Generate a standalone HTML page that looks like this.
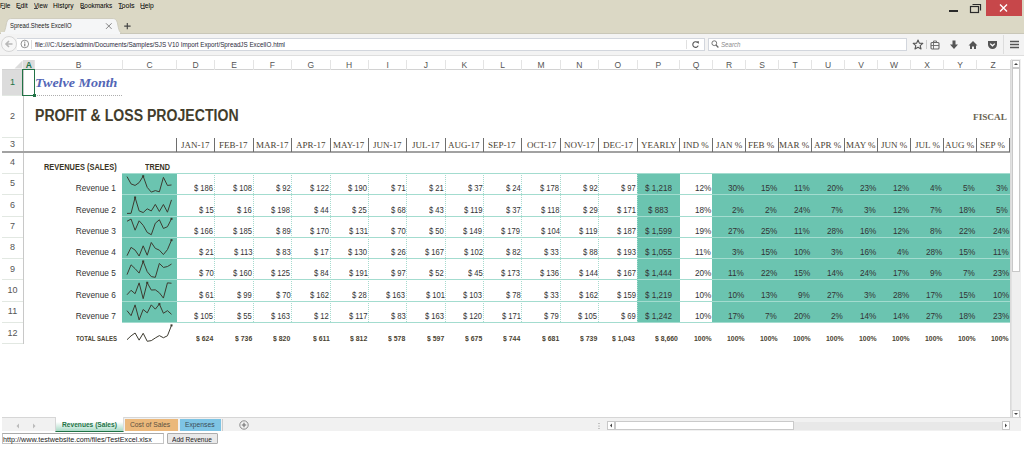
<!DOCTYPE html><html><head><meta charset="utf-8"><style>
*{margin:0;padding:0;box-sizing:border-box}
html,body{width:1024px;height:449px;overflow:hidden;background:#fff;position:relative;font-family:"Liberation Sans",sans-serif}
.a{position:absolute}
.t{position:absolute;white-space:nowrap;line-height:1;transform-origin:0 0}
</style></head><body>
<div class="a" style="left:0;top:0;width:1024px;height:34px;background:#dbd8c5"></div>
<div class="a" style="left:1.5px;top:7.6px;width:3px;height:1px;background:#444"></div>
<div class="a" style="left:17.5px;top:7.6px;width:3px;height:1px;background:#444"></div>
<div class="a" style="left:34.3px;top:7.6px;width:4px;height:1px;background:#444"></div>
<div class="a" style="left:64.5px;top:7.6px;width:2.5px;height:1px;background:#444"></div>
<div class="a" style="left:81px;top:7.6px;width:4px;height:1px;background:#444"></div>
<div class="a" style="left:118.8px;top:7.6px;width:4px;height:1px;background:#444"></div>
<div class="a" style="left:140.8px;top:7.6px;width:4px;height:1px;background:#444"></div>
<div class="a" style="left:986px;top:0;width:36px;height:16px;background:#c7474a"></div>
<svg class="a" style="left:986px;top:0" width="36" height="16"><path d="M14 4.5 L21 11.5 M21 4.5 L14 11.5" stroke="#fff" stroke-width="1.4"/></svg>
<div class="a" style="left:949px;top:10px;width:9px;height:2px;background:#2a2a2a"></div>
<svg class="a" style="left:968px;top:2px" width="14" height="12"><rect x="2.5" y="4.5" width="8" height="6" fill="none" stroke="#2a2a2a" stroke-width="1.2"/><path d="M4.5 2.5 H12.5 V8.5" fill="none" stroke="#2a2a2a" stroke-width="1.2"/></svg>
<svg class="a" style="left:0;top:17px" width="124" height="18"><path d="M0 17 C4 17 5 14 6 9 C7 3 8 1.5 12 1.5 L112 1.5 C116 1.5 117 3 118 9 C119 14 120 16.5 124 17 Z" fill="#f5f6f7" stroke="#c9c7b8" stroke-width="0.8"/></svg>
<svg class="a" style="left:104px;top:22px" width="9" height="9"><path d="M2 1.3 L7.6 6.9 M7.6 1.3 L2 6.9" stroke="#777" stroke-width="0.9"/></svg>
<svg class="a" style="left:123px;top:22px" width="9" height="9"><path d="M4.3 1 V7.2 M1.2 4.1 H7.6" stroke="#444" stroke-width="1.15"/></svg>
<div class="a" style="left:0;top:33px;width:1024px;height:23px;background:#f3f3f3;border-top:1px solid #c9c7b8;border-bottom:1px solid #dedede"></div>
<div class="a" style="left:1px;top:32px;width:119px;height:2px;background:#f5f6f7"></div>
<div class="a" style="left:1px;top:36px;width:16px;height:16px;border-radius:50%;border:1px solid #d6d6d6;background:#f7f7f7"></div>
<svg class="a" style="left:4px;top:39px" width="10" height="10"><path d="M8.5 5 H2 M5 2 L2 5 L5 8" fill="none" stroke="#b8b8b8" stroke-width="1.6"/></svg>
<div class="a" style="left:17px;top:38px;width:688px;height:13px;background:#fff;border:1px solid #d2d6dd;border-left:none"></div>
<svg class="a" style="left:20px;top:39px" width="11" height="11"><circle cx="4.8" cy="5" r="3.8" fill="none" stroke="#777" stroke-width="0.8"/><path d="M4.8 4.5 V7.3" stroke="#555" stroke-width="0.9"/><circle cx="4.8" cy="3.1" r="0.55" fill="#555"/></svg>
<div class="a" style="left:31px;top:40px;width:1px;height:9px;background:#ddd"></div>
<div class="a" style="left:686px;top:40px;width:1px;height:9px;background:#e0e0e0"></div>
<svg class="a" style="left:691px;top:40px" width="9" height="9"><path d="M6.6 2.6 A2.8 2.8 0 1 0 7.2 5.6" fill="none" stroke="#555" stroke-width="1.1"/><path d="M5.4 1.6 L8 1.2 L7.6 3.9 Z" fill="#555"/></svg>
<div class="a" style="left:708px;top:38px;width:199px;height:13px;background:#fff;border:1px solid #d2d6dd"></div>
<svg class="a" style="left:710px;top:40px" width="10" height="10"><circle cx="4.3" cy="3.2" r="2.4" fill="none" stroke="#666" stroke-width="0.9"/><path d="M6 5 L8.4 7.5" stroke="#666" stroke-width="1.2"/></svg>
<svg class="a" style="left:912px;top:39px" width="12" height="11"><path d="M6 1 L7.4 4.2 L10.8 4.4 L8.2 6.6 L9 10 L6 8.2 L3 10 L3.8 6.6 L1.2 4.4 L4.6 4.2 Z" fill="none" stroke="#555" stroke-width="1.1" stroke-linejoin="round"/></svg>
<div class="a" style="left:926px;top:40px;width:1px;height:9px;background:#ccc"></div>
<svg class="a" style="left:930px;top:40px" width="10" height="10"><rect x="1" y="2.5" width="8" height="6.5" rx="1" fill="none" stroke="#666" stroke-width="1.1"/><path d="M3.5 2.5 V1 H6.5 V2.5 M3.5 3 V9 M1 5.5 H9" stroke="#666" stroke-width="0.9" fill="none"/></svg>
<svg class="a" style="left:949px;top:40px" width="10" height="10"><path d="M3.5 0.5 H6.5 V4.5 H9 L5 9 L1 4.5 H3.5 Z" fill="#555"/></svg>
<svg class="a" style="left:968px;top:40px" width="10" height="10"><path d="M5 1 L9.5 5.5 H8 V9 H6 V6.5 H4 V9 H2 V5.5 H0.5 Z" fill="#555"/></svg>
<svg class="a" style="left:987px;top:40px" width="11" height="10"><path d="M1 1 H10 V4.5 A4.5 4.5 0 0 1 1 4.5 Z" fill="#555"/><path d="M3.2 3.6 L5.5 5.8 L7.8 3.6" fill="none" stroke="#fff" stroke-width="1.3"/></svg>
<div class="a" style="left:1003px;top:35px;width:1px;height:19px;background:#ddd"></div>
<svg class="a" style="left:1009px;top:40px" width="11" height="9"><path d="M1 1.5 H10 M1 4.5 H10 M1 7.5 H10" stroke="#555" stroke-width="1.5"/></svg>
<div class="a" style="left:2px;top:69px;width:1008px;height:1px;background:#d2d2d2"></div>
<svg class="a" style="left:14px;top:60px" width="9" height="9"><path d="M8.5 0.5 V8.5 H0.5 Z" fill="#dcdcdc"/></svg>
<div class="a" style="left:23px;top:60px;width:11px;height:9px;background:#dcdcdc"></div>
<div class="t" style="left:23px;top:61px;width:11.5px;text-align:center;font-size:8.5px;color:#217346;font-weight:bold">A</div>
<div class="t" style="left:34.5px;top:61px;width:88.0px;text-align:center;font-size:8.5px;color:#555;font-weight:normal">B</div>
<div class="a" style="left:34px;top:60px;width:1px;height:10px;background:#e4e4e4"></div>
<div class="t" style="left:122.5px;top:61px;width:54.0px;text-align:center;font-size:8.5px;color:#555;font-weight:normal">C</div>
<div class="a" style="left:122px;top:60px;width:1px;height:10px;background:#e4e4e4"></div>
<div class="t" style="left:176.5px;top:61px;width:38.375px;text-align:center;font-size:8.5px;color:#555;font-weight:normal">D</div>
<div class="a" style="left:176px;top:60px;width:1px;height:10px;background:#e4e4e4"></div>
<div class="t" style="left:214.875px;top:61px;width:38.375px;text-align:center;font-size:8.5px;color:#555;font-weight:normal">E</div>
<div class="a" style="left:214px;top:60px;width:1px;height:10px;background:#e4e4e4"></div>
<div class="t" style="left:253.25px;top:61px;width:38.375px;text-align:center;font-size:8.5px;color:#555;font-weight:normal">F</div>
<div class="a" style="left:253px;top:60px;width:1px;height:10px;background:#e4e4e4"></div>
<div class="t" style="left:291.625px;top:61px;width:38.375px;text-align:center;font-size:8.5px;color:#555;font-weight:normal">G</div>
<div class="a" style="left:291px;top:60px;width:1px;height:10px;background:#e4e4e4"></div>
<div class="t" style="left:330.0px;top:61px;width:38.375px;text-align:center;font-size:8.5px;color:#555;font-weight:normal">H</div>
<div class="a" style="left:330px;top:60px;width:1px;height:10px;background:#e4e4e4"></div>
<div class="t" style="left:368.375px;top:61px;width:38.375px;text-align:center;font-size:8.5px;color:#555;font-weight:normal">I</div>
<div class="a" style="left:368px;top:60px;width:1px;height:10px;background:#e4e4e4"></div>
<div class="t" style="left:406.75px;top:61px;width:38.375px;text-align:center;font-size:8.5px;color:#555;font-weight:normal">J</div>
<div class="a" style="left:406px;top:60px;width:1px;height:10px;background:#e4e4e4"></div>
<div class="t" style="left:445.125px;top:61px;width:38.375px;text-align:center;font-size:8.5px;color:#555;font-weight:normal">K</div>
<div class="a" style="left:445px;top:60px;width:1px;height:10px;background:#e4e4e4"></div>
<div class="t" style="left:483.5px;top:61px;width:38.375px;text-align:center;font-size:8.5px;color:#555;font-weight:normal">L</div>
<div class="a" style="left:483px;top:60px;width:1px;height:10px;background:#e4e4e4"></div>
<div class="t" style="left:521.875px;top:61px;width:38.375px;text-align:center;font-size:8.5px;color:#555;font-weight:normal">M</div>
<div class="a" style="left:521px;top:60px;width:1px;height:10px;background:#e4e4e4"></div>
<div class="t" style="left:560.25px;top:61px;width:38.375px;text-align:center;font-size:8.5px;color:#555;font-weight:normal">N</div>
<div class="a" style="left:560px;top:60px;width:1px;height:10px;background:#e4e4e4"></div>
<div class="t" style="left:598.625px;top:61px;width:38.375px;text-align:center;font-size:8.5px;color:#555;font-weight:normal">O</div>
<div class="a" style="left:598px;top:60px;width:1px;height:10px;background:#e4e4e4"></div>
<div class="t" style="left:637.0px;top:61px;width:42.5px;text-align:center;font-size:8.5px;color:#555;font-weight:normal">P</div>
<div class="a" style="left:637px;top:60px;width:1px;height:10px;background:#e4e4e4"></div>
<div class="t" style="left:679.5px;top:61px;width:33.0px;text-align:center;font-size:8.5px;color:#555;font-weight:normal">Q</div>
<div class="a" style="left:679px;top:60px;width:1px;height:10px;background:#e4e4e4"></div>
<div class="t" style="left:712.5px;top:61px;width:33.00999999999999px;text-align:center;font-size:8.5px;color:#555;font-weight:normal">R</div>
<div class="a" style="left:712px;top:60px;width:1px;height:10px;background:#e4e4e4"></div>
<div class="t" style="left:745.51px;top:61px;width:33.00999999999999px;text-align:center;font-size:8.5px;color:#555;font-weight:normal">S</div>
<div class="a" style="left:745px;top:60px;width:1px;height:10px;background:#e4e4e4"></div>
<div class="t" style="left:778.52px;top:61px;width:33.00999999999999px;text-align:center;font-size:8.5px;color:#555;font-weight:normal">T</div>
<div class="a" style="left:778px;top:60px;width:1px;height:10px;background:#e4e4e4"></div>
<div class="t" style="left:811.53px;top:61px;width:33.00999999999999px;text-align:center;font-size:8.5px;color:#555;font-weight:normal">U</div>
<div class="a" style="left:811px;top:60px;width:1px;height:10px;background:#e4e4e4"></div>
<div class="t" style="left:844.54px;top:61px;width:33.00999999999999px;text-align:center;font-size:8.5px;color:#555;font-weight:normal">V</div>
<div class="a" style="left:844px;top:60px;width:1px;height:10px;background:#e4e4e4"></div>
<div class="t" style="left:877.55px;top:61px;width:33.00999999999999px;text-align:center;font-size:8.5px;color:#555;font-weight:normal">W</div>
<div class="a" style="left:877px;top:60px;width:1px;height:10px;background:#e4e4e4"></div>
<div class="t" style="left:910.56px;top:61px;width:33.00999999999999px;text-align:center;font-size:8.5px;color:#555;font-weight:normal">X</div>
<div class="a" style="left:910px;top:60px;width:1px;height:10px;background:#e4e4e4"></div>
<div class="t" style="left:943.5699999999999px;top:61px;width:33.00999999999999px;text-align:center;font-size:8.5px;color:#555;font-weight:normal">Y</div>
<div class="a" style="left:943px;top:60px;width:1px;height:10px;background:#e4e4e4"></div>
<div class="t" style="left:976.5799999999999px;top:61px;width:33.00999999999999px;text-align:center;font-size:8.5px;color:#555;font-weight:normal">Z</div>
<div class="a" style="left:976px;top:60px;width:1px;height:10px;background:#e4e4e4"></div>
<div class="a" style="left:23px;top:70px;width:1px;height:274px;background:#c8c8c8"></div>
<div class="a" style="left:2px;top:70px;width:21px;height:25px;background:#dcdcdc"></div>
<div class="t" style="left:2px;top:70px;width:21px;height:25px;line-height:25px;text-align:center;font-size:9px;color:#217346">1</div>
<div class="a" style="left:2px;top:95px;width:21px;height:1px;background:#e2e8e2"></div>
<div class="t" style="left:2px;top:95px;width:21px;height:42.30000000000001px;line-height:42.30000000000001px;text-align:center;font-size:9px;color:#555">2</div>
<div class="a" style="left:2px;top:137px;width:21px;height:1px;background:#e2e8e2"></div>
<div class="t" style="left:2px;top:137.3px;width:21px;height:14.699999999999989px;line-height:14.699999999999989px;text-align:center;font-size:9px;color:#555">3</div>
<div class="t" style="left:2px;top:152px;width:21px;height:21.400000000000006px;line-height:21.400000000000006px;text-align:center;font-size:9px;color:#555">4</div>
<div class="a" style="left:2px;top:173px;width:21px;height:1px;background:#e2e8e2"></div>
<div class="t" style="left:2px;top:173.4px;width:21px;height:21.310000000000002px;line-height:21.310000000000002px;text-align:center;font-size:9px;color:#555">5</div>
<div class="a" style="left:2px;top:194px;width:21px;height:1px;background:#e2e8e2"></div>
<div class="t" style="left:2px;top:194.71px;width:21px;height:21.310000000000002px;line-height:21.310000000000002px;text-align:center;font-size:9px;color:#555">6</div>
<div class="a" style="left:2px;top:216px;width:21px;height:1px;background:#e2e8e2"></div>
<div class="t" style="left:2px;top:216.02px;width:21px;height:21.309999999999974px;line-height:21.309999999999974px;text-align:center;font-size:9px;color:#555">7</div>
<div class="a" style="left:2px;top:237px;width:21px;height:1px;background:#e2e8e2"></div>
<div class="t" style="left:2px;top:237.32999999999998px;width:21px;height:21.310000000000002px;line-height:21.310000000000002px;text-align:center;font-size:9px;color:#555">8</div>
<div class="a" style="left:2px;top:258px;width:21px;height:1px;background:#e2e8e2"></div>
<div class="t" style="left:2px;top:258.64px;width:21px;height:21.310000000000002px;line-height:21.310000000000002px;text-align:center;font-size:9px;color:#555">9</div>
<div class="a" style="left:2px;top:279px;width:21px;height:1px;background:#e2e8e2"></div>
<div class="t" style="left:2px;top:279.95px;width:21px;height:21.310000000000002px;line-height:21.310000000000002px;text-align:center;font-size:9px;color:#555">10</div>
<div class="a" style="left:2px;top:301px;width:21px;height:1px;background:#e2e8e2"></div>
<div class="t" style="left:2px;top:301.26px;width:21px;height:21.310000000000002px;line-height:21.310000000000002px;text-align:center;font-size:9px;color:#555">11</div>
<div class="a" style="left:2px;top:322px;width:21px;height:1px;background:#e2e8e2"></div>
<div class="t" style="left:2px;top:322.57px;width:21px;height:21.310000000000002px;line-height:21.310000000000002px;text-align:center;font-size:9px;color:#555">12</div>
<div class="a" style="left:2px;top:343px;width:21px;height:1px;background:#e2e8e2"></div>
<div class="a" style="left:2px;top:151px;width:1008px;height:2px;background:#a2a2a2"></div>
<div class="a" style="left:1010px;top:60px;width:1px;height:358px;background:#dadada"></div>
<div class="a" style="left:2px;top:417px;width:1008px;height:1px;background:#d0d0d0"></div>
<div class="a" style="left:22px;top:69px;width:13px;height:27px;border:1.5px solid #217346"></div>
<div class="a" style="left:33px;top:94px;width:3px;height:3px;background:#217346"></div>
<div class="a" style="left:37px;top:94.5px;width:85px;height:1.5px;background-image:linear-gradient(90deg,#9a9a9a 1px,transparent 1px);background-size:2px 1.5px;opacity:.8"></div>
<div class="a" style="left:176px;top:138px;width:1px;height:14px;background:#6e6e6e"></div>
<div class="a" style="left:214px;top:138px;width:1px;height:14px;background:#6e6e6e"></div>
<div class="a" style="left:253px;top:138px;width:1px;height:14px;background:#6e6e6e"></div>
<div class="a" style="left:291px;top:138px;width:1px;height:14px;background:#6e6e6e"></div>
<div class="a" style="left:330px;top:138px;width:1px;height:14px;background:#6e6e6e"></div>
<div class="a" style="left:368px;top:138px;width:1px;height:14px;background:#6e6e6e"></div>
<div class="a" style="left:406px;top:138px;width:1px;height:14px;background:#6e6e6e"></div>
<div class="a" style="left:445px;top:138px;width:1px;height:14px;background:#6e6e6e"></div>
<div class="a" style="left:483px;top:138px;width:1px;height:14px;background:#6e6e6e"></div>
<div class="a" style="left:521px;top:138px;width:1px;height:14px;background:#6e6e6e"></div>
<div class="a" style="left:560px;top:138px;width:1px;height:14px;background:#6e6e6e"></div>
<div class="a" style="left:598px;top:138px;width:1px;height:14px;background:#6e6e6e"></div>
<div class="a" style="left:637px;top:138px;width:1px;height:14px;background:#6e6e6e"></div>
<div class="a" style="left:679px;top:138px;width:1px;height:14px;background:#6e6e6e"></div>
<div class="a" style="left:712px;top:138px;width:1px;height:14px;background:#6e6e6e"></div>
<div class="a" style="left:745px;top:138px;width:1px;height:14px;background:#6e6e6e"></div>
<div class="a" style="left:778px;top:138px;width:1px;height:14px;background:#6e6e6e"></div>
<div class="a" style="left:811px;top:138px;width:1px;height:14px;background:#6e6e6e"></div>
<div class="a" style="left:844px;top:138px;width:1px;height:14px;background:#6e6e6e"></div>
<div class="a" style="left:877px;top:138px;width:1px;height:14px;background:#6e6e6e"></div>
<div class="a" style="left:910px;top:138px;width:1px;height:14px;background:#6e6e6e"></div>
<div class="a" style="left:943px;top:138px;width:1px;height:14px;background:#6e6e6e"></div>
<div class="a" style="left:976px;top:138px;width:1px;height:14px;background:#6e6e6e"></div>
<div class="a" style="left:1009px;top:138px;width:1px;height:14px;background:#6e6e6e"></div>
<div class="a" style="left:122px;top:173.4px;width:54.5px;height:149.17px;background:#6bc4b0"></div>
<div class="a" style="left:637px;top:173.4px;width:42.5px;height:149.17px;background:#6bc4b0"></div>
<div class="a" style="left:712px;top:173.4px;width:297.5px;height:149.17px;background:#6bc4b0"></div>
<div class="a" style="left:122px;top:173px;width:888px;height:1px;background:#a3dccf"></div>
<div class="a" style="left:122px;top:194px;width:888px;height:1px;background:#a3dccf"></div>
<div class="a" style="left:122px;top:216px;width:888px;height:1px;background:#a3dccf"></div>
<div class="a" style="left:122px;top:237px;width:888px;height:1px;background:#a3dccf"></div>
<div class="a" style="left:122px;top:258px;width:888px;height:1px;background:#a3dccf"></div>
<div class="a" style="left:122px;top:279px;width:888px;height:1px;background:#a3dccf"></div>
<div class="a" style="left:122px;top:301px;width:888px;height:1px;background:#a3dccf"></div>
<div class="a" style="left:122px;top:322px;width:888px;height:1px;background:#a3dccf"></div>
<div class="a" style="left:214px;top:173.4px;width:1px;height:149.17px;background-image:linear-gradient(180deg,#a6dbce 1px,transparent 1px);background-size:1px 2px"></div>
<div class="a" style="left:253px;top:173.4px;width:1px;height:149.17px;background-image:linear-gradient(180deg,#a6dbce 1px,transparent 1px);background-size:1px 2px"></div>
<div class="a" style="left:291px;top:173.4px;width:1px;height:149.17px;background-image:linear-gradient(180deg,#a6dbce 1px,transparent 1px);background-size:1px 2px"></div>
<div class="a" style="left:330px;top:173.4px;width:1px;height:149.17px;background-image:linear-gradient(180deg,#a6dbce 1px,transparent 1px);background-size:1px 2px"></div>
<div class="a" style="left:368px;top:173.4px;width:1px;height:149.17px;background-image:linear-gradient(180deg,#a6dbce 1px,transparent 1px);background-size:1px 2px"></div>
<div class="a" style="left:406px;top:173.4px;width:1px;height:149.17px;background-image:linear-gradient(180deg,#a6dbce 1px,transparent 1px);background-size:1px 2px"></div>
<div class="a" style="left:445px;top:173.4px;width:1px;height:149.17px;background-image:linear-gradient(180deg,#a6dbce 1px,transparent 1px);background-size:1px 2px"></div>
<div class="a" style="left:483px;top:173.4px;width:1px;height:149.17px;background-image:linear-gradient(180deg,#a6dbce 1px,transparent 1px);background-size:1px 2px"></div>
<div class="a" style="left:521px;top:173.4px;width:1px;height:149.17px;background-image:linear-gradient(180deg,#a6dbce 1px,transparent 1px);background-size:1px 2px"></div>
<div class="a" style="left:560px;top:173.4px;width:1px;height:149.17px;background-image:linear-gradient(180deg,#a6dbce 1px,transparent 1px);background-size:1px 2px"></div>
<div class="a" style="left:598px;top:173.4px;width:1px;height:149.17px;background-image:linear-gradient(180deg,#a6dbce 1px,transparent 1px);background-size:1px 2px"></div>
<div class="a" style="left:637px;top:173.4px;width:1px;height:149.17px;background-image:linear-gradient(180deg,#a6dbce 1px,transparent 1px);background-size:1px 2px"></div>
<svg class="a" style="left:0;top:0" width="1024" height="449"><path d="M127.00 176.58 L131.05 183.92 L135.09 185.43 L139.14 182.60 L143.18 176.20 L147.23 187.40 L151.27 192.11 L155.32 190.60 L159.36 191.83 L163.41 177.33 L167.45 185.43 L171.50 184.96" fill="none" stroke="#3d3b30" stroke-width="1" stroke-linejoin="round"/><rect x="142.18" y="175.20" width="2" height="2" fill="#3a3a2e"/><path d="M127.00 213.42 L131.05 213.33 L135.09 197.51 L139.14 210.90 L143.18 212.55 L147.23 208.81 L151.27 210.99 L155.32 204.38 L159.36 211.51 L163.41 204.47 L167.45 212.20 L171.50 199.86" fill="none" stroke="#3d3b30" stroke-width="1" stroke-linejoin="round"/><rect x="134.09" y="196.51" width="2" height="2" fill="#3a3a2e"/><path d="M127.00 221.26 L131.05 219.05 L135.09 230.20 L139.14 220.79 L143.18 225.32 L147.23 232.41 L151.27 234.73 L155.32 223.23 L159.36 219.75 L163.41 228.46 L167.45 226.72 L171.50 218.82" fill="none" stroke="#3d3b30" stroke-width="1" stroke-linejoin="round"/><rect x="170.50" y="217.82" width="2" height="2" fill="#3a3a2e"/><path d="M127.00 255.68 L131.05 247.36 L135.09 250.07 L139.14 256.04 L143.18 245.83 L147.23 255.23 L151.27 242.48 L155.32 248.36 L159.36 250.16 L163.41 254.59 L167.45 249.62 L171.50 240.13" fill="none" stroke="#3d3b30" stroke-width="1" stroke-linejoin="round"/><rect x="170.50" y="239.13" width="2" height="2" fill="#3a3a2e"/><path d="M127.00 274.63 L131.05 264.82 L135.09 268.63 L139.14 273.10 L143.18 261.44 L147.23 271.68 L151.27 276.59 L155.32 277.35 L159.36 263.40 L163.41 267.43 L167.45 266.56 L171.50 264.06" fill="none" stroke="#3d3b30" stroke-width="1" stroke-linejoin="round"/><rect x="142.18" y="260.44" width="2" height="2" fill="#3a3a2e"/><path d="M127.00 294.77 L131.05 290.29 L135.09 293.71 L139.14 282.87 L143.18 298.66 L147.23 282.75 L151.27 290.06 L155.32 289.82 L159.36 292.77 L163.41 298.07 L167.45 282.87 L171.50 283.22" fill="none" stroke="#3d3b30" stroke-width="1" stroke-linejoin="round"/><rect x="146.23" y="281.75" width="2" height="2" fill="#3a3a2e"/><path d="M127.00 310.66 L131.05 315.67 L135.09 304.86 L139.14 319.97 L143.18 309.46 L147.23 312.87 L151.27 304.86 L155.32 309.16 L159.36 304.06 L163.41 313.27 L167.45 310.66 L171.50 314.27" fill="none" stroke="#3d3b30" stroke-width="1" stroke-linejoin="round"/><rect x="158.36" y="303.06" width="2" height="2" fill="#3a3a2e"/><path d="M127.00 339.71 L131.05 335.87 L135.09 333.00 L139.14 340.15 L143.18 333.27 L147.23 341.28 L151.27 340.63 L155.32 337.96 L159.36 335.60 L163.41 337.76 L167.45 335.77 L171.50 325.37" fill="none" stroke="#3d3b30" stroke-width="1" stroke-linejoin="round"/><rect x="170.50" y="324.37" width="2" height="2" fill="#3a3a2e"/></svg>
<div class="a" style="left:1011px;top:59px;width:10px;height:359px;background:#efefef;border-left:1px solid #e2e2e2"></div>
<div class="a" style="left:1012px;top:60px;width:8px;height:8px;background:#fff;border:1px solid #c8c8c8"></div>
<svg class="a" style="left:1012px;top:60px" width="8" height="8"><path d="M2 5 L4 3 L6 5 Z" fill="#444"/></svg>
<div class="a" style="left:1012px;top:68px;width:8px;height:204px;background:#fff;border:1px solid #c8c8c8"></div>
<div class="a" style="left:1012px;top:410px;width:8px;height:8px;background:#fff;border:1px solid #c8c8c8"></div>
<svg class="a" style="left:1012px;top:410px" width="8" height="8"><path d="M2 3 L4 5 L6 3 Z" fill="#444"/></svg>
<div class="a" style="left:2px;top:417px;width:1019px;height:14px;background:#f1f1f1;border-top:1px solid #d6d6d6"></div>
<svg class="a" style="left:14px;top:422px" width="24" height="8"><path d="M5 1.5 L2.5 4 L5 6.5 Z M19 1.5 L21.5 4 L19 6.5 Z" fill="#bbb"/></svg>
<div class="a" style="left:55px;top:417px;width:68.5px;height:14.5px;background:linear-gradient(180deg,#ffffff 35%,#a9dac6 100%);border-bottom:1.5px solid #217346;border-left:1px solid #d6d6d6;border-right:1px solid #dcdcdc"></div>
<div class="a" style="left:124.5px;top:419px;width:53px;height:11.5px;background:#ebb87b"></div>
<div class="a" style="left:180px;top:419px;width:41px;height:11.5px;background:#7ec4e4"></div>
<div class="a" style="left:222px;top:419px;width:1px;height:12px;background:#ccc"></div>
<svg class="a" style="left:238px;top:419px" width="12" height="12"><circle cx="6" cy="6" r="4.2" fill="none" stroke="#808080" stroke-width="0.9"/><path d="M6 3.8 V8.2 M3.8 6 H8.2" stroke="#707070" stroke-width="1.1"/></svg>
<svg class="a" style="left:597px;top:422px" width="4" height="8"><circle cx="2" cy="1.5" r="0.6" fill="#888"/><circle cx="2" cy="4" r="0.6" fill="#888"/><circle cx="2" cy="6.5" r="0.6" fill="#888"/></svg>
<div class="a" style="left:607px;top:421.5px;width:403px;height:8px;background:#e8e8e8"></div>
<div class="a" style="left:607px;top:421px;width:8px;height:9px;background:#fff;border:1px solid #c8c8c8"></div>
<svg class="a" style="left:607px;top:421px" width="8" height="9"><path d="M5 2.5 L3 4.5 L5 6.5 Z" fill="#444"/></svg>
<div class="a" style="left:615px;top:421px;width:179px;height:9px;background:#fff;border:1px solid #cacaca"></div>
<div class="a" style="left:1002px;top:421px;width:8px;height:9px;background:#fff;border:1px solid #c8c8c8"></div>
<svg class="a" style="left:1002px;top:421px" width="8" height="9"><path d="M3 2.5 L5 4.5 L3 6.5 Z" fill="#444"/></svg>
<div class="a" style="left:2px;top:433px;width:162px;height:11px;background:#fff;border:1px solid #c4c4c4;border-top-color:#aaa"></div>
<div class="a" style="left:167px;top:433px;width:51px;height:11px;background:#e9e9e9;border:1px solid #adadad;border-radius:1px"></div>
<div class="t" style="left:0.27px;top:2.00px;font-family:'Liberation Sans',sans-serif;font-size:7px;font-weight:normal;font-style:normal;color:#000;transform:scaleX(0.9300);">File</div>
<div class="t" style="left:16.03px;top:2.00px;font-family:'Liberation Sans',sans-serif;font-size:7px;font-weight:normal;font-style:normal;color:#000;transform:scaleX(0.9727);">Edit</div>
<div class="t" style="left:34.00px;top:2.00px;font-family:'Liberation Sans',sans-serif;font-size:7px;font-weight:normal;font-style:normal;color:#000;transform:scaleX(0.9000);">View</div>
<div class="t" style="left:52.95px;top:2.00px;font-family:'Liberation Sans',sans-serif;font-size:7px;font-weight:normal;font-style:normal;color:#000;transform:scaleX(0.9476);">History</div>
<div class="t" style="left:79.78px;top:2.00px;font-family:'Liberation Sans',sans-serif;font-size:7px;font-weight:normal;font-style:normal;color:#000;transform:scaleX(0.9206);">Bookmarks</div>
<div class="t" style="left:117.59px;top:2.00px;font-family:'Liberation Sans',sans-serif;font-size:7px;font-weight:normal;font-style:normal;color:#000;transform:scaleX(1.0133);">Tools</div>
<div class="t" style="left:139.54px;top:2.00px;font-family:'Liberation Sans',sans-serif;font-size:7px;font-weight:normal;font-style:normal;color:#000;transform:scaleX(0.9615);">Help</div>
<div class="t" style="left:9.90px;top:22.20px;font-family:'Liberation Sans',sans-serif;font-size:7.4px;font-weight:normal;font-style:normal;color:#222;transform:scaleX(0.8027);">Spread.Sheets ExcelIO</div>
<div class="t" style="left:34.90px;top:41.20px;font-family:'Liberation Sans',sans-serif;font-size:7.5px;font-weight:normal;font-style:normal;color:#2b2b3b;transform:scaleX(0.8365);">file:///C:/Users/admin/Documents/Samples/SJS V10 Import Export/SpreadJS ExcelIO.html</div>
<div class="t" style="left:720.88px;top:41.70px;font-family:'Liberation Sans',sans-serif;font-size:6.7px;font-weight:normal;font-style:italic;color:#8a8a8a;transform:scaleX(0.9150);">Search</div>
<div class="t" style="left:35.41px;top:77.50px;font-family:'Liberation Serif',serif;font-size:11.8px;font-weight:bold;font-style:italic;color:#5366b6;transform:scaleX(1.1882);">Twelve Month</div>
<div class="t" style="left:35.35px;top:108.00px;font-family:'Liberation Sans',sans-serif;font-size:15.6px;font-weight:bold;font-style:normal;color:#433d2c;transform:scaleX(0.9038);">PROFIT &amp; LOSS PROJECTION</div>
<div class="t" style="left:972.91px;top:112.50px;font-family:'Liberation Serif',serif;font-size:8.5px;font-weight:bold;font-style:normal;color:#6a6352;transform:scaleX(1.0867);">FISCAL</div>
<div class="t" style="left:181.49px;top:141.00px;font-family:'Liberation Serif',serif;font-size:8.9px;font-weight:normal;font-style:normal;color:#4a4232;transform:scaleX(1.0143);">JAN-17</div>
<div class="t" style="left:219.36px;top:141.00px;font-family:'Liberation Serif',serif;font-size:8.9px;font-weight:normal;font-style:normal;color:#4a4232;transform:scaleX(1.0143);">FEB-17</div>
<div class="t" style="left:255.70px;top:141.00px;font-family:'Liberation Serif',serif;font-size:8.9px;font-weight:normal;font-style:normal;color:#4a4232;transform:scaleX(1.0143);">MAR-17</div>
<div class="t" style="left:295.60px;top:141.00px;font-family:'Liberation Serif',serif;font-size:8.9px;font-weight:normal;font-style:normal;color:#4a4232;transform:scaleX(1.0143);">APR-17</div>
<div class="t" style="left:333.47px;top:141.00px;font-family:'Liberation Serif',serif;font-size:8.9px;font-weight:normal;font-style:normal;color:#4a4232;transform:scaleX(1.0143);">MAY-17</div>
<div class="t" style="left:373.36px;top:141.00px;font-family:'Liberation Serif',serif;font-size:8.9px;font-weight:normal;font-style:normal;color:#4a4232;transform:scaleX(1.0143);">JUN-17</div>
<div class="t" style="left:412.24px;top:141.00px;font-family:'Liberation Serif',serif;font-size:8.9px;font-weight:normal;font-style:normal;color:#4a4232;transform:scaleX(1.0143);">JUL-17</div>
<div class="t" style="left:448.08px;top:141.00px;font-family:'Liberation Serif',serif;font-size:8.9px;font-weight:normal;font-style:normal;color:#4a4232;transform:scaleX(1.0143);">AUG-17</div>
<div class="t" style="left:488.49px;top:141.00px;font-family:'Liberation Serif',serif;font-size:8.9px;font-weight:normal;font-style:normal;color:#4a4232;transform:scaleX(1.0143);">SEP-17</div>
<div class="t" style="left:526.86px;top:141.00px;font-family:'Liberation Serif',serif;font-size:8.9px;font-weight:normal;font-style:normal;color:#4a4232;transform:scaleX(1.0143);">OCT-17</div>
<div class="t" style="left:563.72px;top:141.00px;font-family:'Liberation Serif',serif;font-size:8.9px;font-weight:normal;font-style:normal;color:#4a4232;transform:scaleX(1.0143);">NOV-17</div>
<div class="t" style="left:602.60px;top:141.00px;font-family:'Liberation Serif',serif;font-size:8.9px;font-weight:normal;font-style:normal;color:#4a4232;transform:scaleX(1.0143);">DEC-17</div>
<div class="t" style="left:640.50px;top:141.00px;font-family:'Liberation Serif',serif;font-size:8.9px;font-weight:normal;font-style:normal;color:#4a4232;transform:scaleX(1.0143);">YEARLY</div>
<div class="t" style="left:682.81px;top:141.00px;font-family:'Liberation Serif',serif;font-size:8.9px;font-weight:normal;font-style:normal;color:#4a4232;transform:scaleX(1.0143);">IND %</div>
<div class="t" style="left:715.82px;top:141.00px;font-family:'Liberation Serif',serif;font-size:8.9px;font-weight:normal;font-style:normal;color:#4a4232;transform:scaleX(1.0143);">JAN %</div>
<div class="t" style="left:748.32px;top:141.00px;font-family:'Liberation Serif',serif;font-size:8.9px;font-weight:normal;font-style:normal;color:#4a4232;transform:scaleX(1.0143);">FEB %</div>
<div class="t" style="left:779.30px;top:141.00px;font-family:'Liberation Serif',serif;font-size:8.9px;font-weight:normal;font-style:normal;color:#4a4232;transform:scaleX(1.0143);">MAR %</div>
<div class="t" style="left:813.83px;top:141.00px;font-family:'Liberation Serif',serif;font-size:8.9px;font-weight:normal;font-style:normal;color:#4a4232;transform:scaleX(1.0143);">APR %</div>
<div class="t" style="left:845.83px;top:141.00px;font-family:'Liberation Serif',serif;font-size:8.9px;font-weight:normal;font-style:normal;color:#4a4232;transform:scaleX(1.0143);">MAY %</div>
<div class="t" style="left:880.87px;top:141.00px;font-family:'Liberation Serif',serif;font-size:8.9px;font-weight:normal;font-style:normal;color:#4a4232;transform:scaleX(1.0143);">JUN %</div>
<div class="t" style="left:914.89px;top:141.00px;font-family:'Liberation Serif',serif;font-size:8.9px;font-weight:normal;font-style:normal;color:#4a4232;transform:scaleX(1.0143);">JUL %</div>
<div class="t" style="left:944.86px;top:141.00px;font-family:'Liberation Serif',serif;font-size:8.9px;font-weight:normal;font-style:normal;color:#4a4232;transform:scaleX(1.0143);">AUG %</div>
<div class="t" style="left:980.41px;top:141.00px;font-family:'Liberation Serif',serif;font-size:8.9px;font-weight:normal;font-style:normal;color:#4a4232;transform:scaleX(1.0143);">SEP %</div>
<div class="t" style="left:43.96px;top:163.30px;font-family:'Liberation Sans',sans-serif;font-size:8.8px;font-weight:bold;font-style:normal;color:#3a3424;transform:scaleX(0.8447);">REVENUES (SALES)</div>
<div class="t" style="left:145.30px;top:163.30px;font-family:'Liberation Sans',sans-serif;font-size:8.8px;font-weight:bold;font-style:normal;color:#3a3424;transform:scaleX(0.8233);">TREND</div>
<div class="t" style="left:75.70px;top:184.21px;font-family:'Liberation Sans',sans-serif;font-size:8.3px;font-weight:normal;font-style:normal;color:#333;transform:scaleX(1.0000);">Revenue 1</div>
<div class="t" style="left:194.38px;top:184.21px;font-family:'Liberation Sans',sans-serif;font-size:8.3px;font-weight:normal;font-style:normal;color:#333;transform:scaleX(0.9190);">$ 186</div>
<div class="t" style="left:232.75px;top:184.21px;font-family:'Liberation Sans',sans-serif;font-size:8.3px;font-weight:normal;font-style:normal;color:#333;transform:scaleX(0.9190);">$ 108</div>
<div class="t" style="left:275.72px;top:184.21px;font-family:'Liberation Sans',sans-serif;font-size:8.3px;font-weight:normal;font-style:normal;color:#333;transform:scaleX(0.9190);">$ 92</div>
<div class="t" style="left:310.42px;top:184.21px;font-family:'Liberation Sans',sans-serif;font-size:8.3px;font-weight:normal;font-style:normal;color:#333;transform:scaleX(0.9190);">$ 122</div>
<div class="t" style="left:347.88px;top:184.21px;font-family:'Liberation Sans',sans-serif;font-size:8.3px;font-weight:normal;font-style:normal;color:#333;transform:scaleX(0.9190);">$ 190</div>
<div class="t" style="left:390.85px;top:184.21px;font-family:'Liberation Sans',sans-serif;font-size:8.3px;font-weight:normal;font-style:normal;color:#333;transform:scaleX(0.9190);">$ 71</div>
<div class="t" style="left:429.22px;top:184.21px;font-family:'Liberation Sans',sans-serif;font-size:8.3px;font-weight:normal;font-style:normal;color:#333;transform:scaleX(0.9190);">$ 21</div>
<div class="t" style="left:467.60px;top:184.21px;font-family:'Liberation Sans',sans-serif;font-size:8.3px;font-weight:normal;font-style:normal;color:#333;transform:scaleX(0.9190);">$ 37</div>
<div class="t" style="left:505.97px;top:184.21px;font-family:'Liberation Sans',sans-serif;font-size:8.3px;font-weight:normal;font-style:normal;color:#333;transform:scaleX(0.9190);">$ 24</div>
<div class="t" style="left:539.75px;top:184.21px;font-family:'Liberation Sans',sans-serif;font-size:8.3px;font-weight:normal;font-style:normal;color:#333;transform:scaleX(0.9190);">$ 178</div>
<div class="t" style="left:582.72px;top:184.21px;font-family:'Liberation Sans',sans-serif;font-size:8.3px;font-weight:normal;font-style:normal;color:#333;transform:scaleX(0.9190);">$ 92</div>
<div class="t" style="left:621.10px;top:184.21px;font-family:'Liberation Sans',sans-serif;font-size:8.3px;font-weight:normal;font-style:normal;color:#333;transform:scaleX(0.9190);">$ 97</div>
<div class="t" style="left:645.10px;top:184.21px;font-family:'Liberation Sans',sans-serif;font-size:8.3px;font-weight:normal;font-style:normal;color:#333;transform:scaleX(0.9741);">$ 1,218</div>
<div class="t" style="left:695.11px;top:184.21px;font-family:'Liberation Sans',sans-serif;font-size:8.3px;font-weight:normal;font-style:normal;color:#333;transform:scaleX(0.9867);">12%</div>
<div class="t" style="left:728.42px;top:184.21px;font-family:'Liberation Sans',sans-serif;font-size:8.3px;font-weight:normal;font-style:normal;color:#333;transform:scaleX(0.9867);">30%</div>
<div class="t" style="left:761.43px;top:184.21px;font-family:'Liberation Sans',sans-serif;font-size:8.3px;font-weight:normal;font-style:normal;color:#333;transform:scaleX(0.9867);">15%</div>
<div class="t" style="left:794.44px;top:184.21px;font-family:'Liberation Sans',sans-serif;font-size:8.3px;font-weight:normal;font-style:normal;color:#333;transform:scaleX(0.9867);">11%</div>
<div class="t" style="left:827.45px;top:184.21px;font-family:'Liberation Sans',sans-serif;font-size:8.3px;font-weight:normal;font-style:normal;color:#333;transform:scaleX(0.9867);">20%</div>
<div class="t" style="left:860.46px;top:184.21px;font-family:'Liberation Sans',sans-serif;font-size:8.3px;font-weight:normal;font-style:normal;color:#333;transform:scaleX(0.9867);">23%</div>
<div class="t" style="left:893.47px;top:184.21px;font-family:'Liberation Sans',sans-serif;font-size:8.3px;font-weight:normal;font-style:normal;color:#333;transform:scaleX(0.9867);">12%</div>
<div class="t" style="left:930.43px;top:184.21px;font-family:'Liberation Sans',sans-serif;font-size:8.3px;font-weight:normal;font-style:normal;color:#333;transform:scaleX(0.9867);">4%</div>
<div class="t" style="left:963.44px;top:184.21px;font-family:'Liberation Sans',sans-serif;font-size:8.3px;font-weight:normal;font-style:normal;color:#333;transform:scaleX(0.9867);">5%</div>
<div class="t" style="left:996.45px;top:184.21px;font-family:'Liberation Sans',sans-serif;font-size:8.3px;font-weight:normal;font-style:normal;color:#333;transform:scaleX(0.9867);">3%</div>
<div class="t" style="left:75.70px;top:205.52px;font-family:'Liberation Sans',sans-serif;font-size:8.3px;font-weight:normal;font-style:normal;color:#333;transform:scaleX(1.0000);">Revenue 2</div>
<div class="t" style="left:198.97px;top:205.52px;font-family:'Liberation Sans',sans-serif;font-size:8.3px;font-weight:normal;font-style:normal;color:#333;transform:scaleX(0.9190);">$ 15</div>
<div class="t" style="left:237.35px;top:205.52px;font-family:'Liberation Sans',sans-serif;font-size:8.3px;font-weight:normal;font-style:normal;color:#333;transform:scaleX(0.9190);">$ 16</div>
<div class="t" style="left:271.12px;top:205.52px;font-family:'Liberation Sans',sans-serif;font-size:8.3px;font-weight:normal;font-style:normal;color:#333;transform:scaleX(0.9190);">$ 198</div>
<div class="t" style="left:314.10px;top:205.52px;font-family:'Liberation Sans',sans-serif;font-size:8.3px;font-weight:normal;font-style:normal;color:#333;transform:scaleX(0.9190);">$ 44</div>
<div class="t" style="left:352.47px;top:205.52px;font-family:'Liberation Sans',sans-serif;font-size:8.3px;font-weight:normal;font-style:normal;color:#333;transform:scaleX(0.9190);">$ 25</div>
<div class="t" style="left:390.85px;top:205.52px;font-family:'Liberation Sans',sans-serif;font-size:8.3px;font-weight:normal;font-style:normal;color:#333;transform:scaleX(0.9190);">$ 68</div>
<div class="t" style="left:429.22px;top:205.52px;font-family:'Liberation Sans',sans-serif;font-size:8.3px;font-weight:normal;font-style:normal;color:#333;transform:scaleX(0.9190);">$ 43</div>
<div class="t" style="left:463.92px;top:205.52px;font-family:'Liberation Sans',sans-serif;font-size:8.3px;font-weight:normal;font-style:normal;color:#333;transform:scaleX(0.9190);">$ 119</div>
<div class="t" style="left:505.97px;top:205.52px;font-family:'Liberation Sans',sans-serif;font-size:8.3px;font-weight:normal;font-style:normal;color:#333;transform:scaleX(0.9190);">$ 37</div>
<div class="t" style="left:540.67px;top:205.52px;font-family:'Liberation Sans',sans-serif;font-size:8.3px;font-weight:normal;font-style:normal;color:#333;transform:scaleX(0.9190);">$ 118</div>
<div class="t" style="left:582.72px;top:205.52px;font-family:'Liberation Sans',sans-serif;font-size:8.3px;font-weight:normal;font-style:normal;color:#333;transform:scaleX(0.9190);">$ 29</div>
<div class="t" style="left:617.42px;top:205.52px;font-family:'Liberation Sans',sans-serif;font-size:8.3px;font-weight:normal;font-style:normal;color:#333;transform:scaleX(0.9190);">$ 171</div>
<div class="t" style="left:648.02px;top:205.52px;font-family:'Liberation Sans',sans-serif;font-size:8.3px;font-weight:normal;font-style:normal;color:#333;transform:scaleX(0.9741);">$ 883</div>
<div class="t" style="left:695.11px;top:205.52px;font-family:'Liberation Sans',sans-serif;font-size:8.3px;font-weight:normal;font-style:normal;color:#333;transform:scaleX(0.9867);">18%</div>
<div class="t" style="left:732.37px;top:205.52px;font-family:'Liberation Sans',sans-serif;font-size:8.3px;font-weight:normal;font-style:normal;color:#333;transform:scaleX(0.9867);">2%</div>
<div class="t" style="left:765.38px;top:205.52px;font-family:'Liberation Sans',sans-serif;font-size:8.3px;font-weight:normal;font-style:normal;color:#333;transform:scaleX(0.9867);">2%</div>
<div class="t" style="left:794.44px;top:205.52px;font-family:'Liberation Sans',sans-serif;font-size:8.3px;font-weight:normal;font-style:normal;color:#333;transform:scaleX(0.9867);">24%</div>
<div class="t" style="left:831.40px;top:205.52px;font-family:'Liberation Sans',sans-serif;font-size:8.3px;font-weight:normal;font-style:normal;color:#333;transform:scaleX(0.9867);">7%</div>
<div class="t" style="left:864.41px;top:205.52px;font-family:'Liberation Sans',sans-serif;font-size:8.3px;font-weight:normal;font-style:normal;color:#333;transform:scaleX(0.9867);">3%</div>
<div class="t" style="left:893.47px;top:205.52px;font-family:'Liberation Sans',sans-serif;font-size:8.3px;font-weight:normal;font-style:normal;color:#333;transform:scaleX(0.9867);">12%</div>
<div class="t" style="left:930.43px;top:205.52px;font-family:'Liberation Sans',sans-serif;font-size:8.3px;font-weight:normal;font-style:normal;color:#333;transform:scaleX(0.9867);">7%</div>
<div class="t" style="left:959.49px;top:205.52px;font-family:'Liberation Sans',sans-serif;font-size:8.3px;font-weight:normal;font-style:normal;color:#333;transform:scaleX(0.9867);">18%</div>
<div class="t" style="left:996.45px;top:205.52px;font-family:'Liberation Sans',sans-serif;font-size:8.3px;font-weight:normal;font-style:normal;color:#333;transform:scaleX(0.9867);">5%</div>
<div class="t" style="left:75.70px;top:226.83px;font-family:'Liberation Sans',sans-serif;font-size:8.3px;font-weight:normal;font-style:normal;color:#333;transform:scaleX(1.0000);">Revenue 3</div>
<div class="t" style="left:194.38px;top:226.83px;font-family:'Liberation Sans',sans-serif;font-size:8.3px;font-weight:normal;font-style:normal;color:#333;transform:scaleX(0.9190);">$ 166</div>
<div class="t" style="left:232.75px;top:226.83px;font-family:'Liberation Sans',sans-serif;font-size:8.3px;font-weight:normal;font-style:normal;color:#333;transform:scaleX(0.9190);">$ 185</div>
<div class="t" style="left:275.72px;top:226.83px;font-family:'Liberation Sans',sans-serif;font-size:8.3px;font-weight:normal;font-style:normal;color:#333;transform:scaleX(0.9190);">$ 89</div>
<div class="t" style="left:309.50px;top:226.83px;font-family:'Liberation Sans',sans-serif;font-size:8.3px;font-weight:normal;font-style:normal;color:#333;transform:scaleX(0.9190);">$ 170</div>
<div class="t" style="left:348.79px;top:226.83px;font-family:'Liberation Sans',sans-serif;font-size:8.3px;font-weight:normal;font-style:normal;color:#333;transform:scaleX(0.9190);">$ 131</div>
<div class="t" style="left:390.85px;top:226.83px;font-family:'Liberation Sans',sans-serif;font-size:8.3px;font-weight:normal;font-style:normal;color:#333;transform:scaleX(0.9190);">$ 70</div>
<div class="t" style="left:429.22px;top:226.83px;font-family:'Liberation Sans',sans-serif;font-size:8.3px;font-weight:normal;font-style:normal;color:#333;transform:scaleX(0.9190);">$ 50</div>
<div class="t" style="left:463.00px;top:226.83px;font-family:'Liberation Sans',sans-serif;font-size:8.3px;font-weight:normal;font-style:normal;color:#333;transform:scaleX(0.9190);">$ 149</div>
<div class="t" style="left:501.38px;top:226.83px;font-family:'Liberation Sans',sans-serif;font-size:8.3px;font-weight:normal;font-style:normal;color:#333;transform:scaleX(0.9190);">$ 179</div>
<div class="t" style="left:540.67px;top:226.83px;font-family:'Liberation Sans',sans-serif;font-size:8.3px;font-weight:normal;font-style:normal;color:#333;transform:scaleX(0.9190);">$ 104</div>
<div class="t" style="left:579.04px;top:226.83px;font-family:'Liberation Sans',sans-serif;font-size:8.3px;font-weight:normal;font-style:normal;color:#333;transform:scaleX(0.9190);">$ 119</div>
<div class="t" style="left:616.50px;top:226.83px;font-family:'Liberation Sans',sans-serif;font-size:8.3px;font-weight:normal;font-style:normal;color:#333;transform:scaleX(0.9190);">$ 187</div>
<div class="t" style="left:645.10px;top:226.83px;font-family:'Liberation Sans',sans-serif;font-size:8.3px;font-weight:normal;font-style:normal;color:#333;transform:scaleX(0.9741);">$ 1,599</div>
<div class="t" style="left:695.11px;top:226.83px;font-family:'Liberation Sans',sans-serif;font-size:8.3px;font-weight:normal;font-style:normal;color:#333;transform:scaleX(0.9867);">19%</div>
<div class="t" style="left:728.42px;top:226.83px;font-family:'Liberation Sans',sans-serif;font-size:8.3px;font-weight:normal;font-style:normal;color:#333;transform:scaleX(0.9867);">27%</div>
<div class="t" style="left:761.43px;top:226.83px;font-family:'Liberation Sans',sans-serif;font-size:8.3px;font-weight:normal;font-style:normal;color:#333;transform:scaleX(0.9867);">25%</div>
<div class="t" style="left:794.44px;top:226.83px;font-family:'Liberation Sans',sans-serif;font-size:8.3px;font-weight:normal;font-style:normal;color:#333;transform:scaleX(0.9867);">11%</div>
<div class="t" style="left:827.45px;top:226.83px;font-family:'Liberation Sans',sans-serif;font-size:8.3px;font-weight:normal;font-style:normal;color:#333;transform:scaleX(0.9867);">28%</div>
<div class="t" style="left:860.46px;top:226.83px;font-family:'Liberation Sans',sans-serif;font-size:8.3px;font-weight:normal;font-style:normal;color:#333;transform:scaleX(0.9867);">16%</div>
<div class="t" style="left:893.47px;top:226.83px;font-family:'Liberation Sans',sans-serif;font-size:8.3px;font-weight:normal;font-style:normal;color:#333;transform:scaleX(0.9867);">12%</div>
<div class="t" style="left:930.43px;top:226.83px;font-family:'Liberation Sans',sans-serif;font-size:8.3px;font-weight:normal;font-style:normal;color:#333;transform:scaleX(0.9867);">8%</div>
<div class="t" style="left:959.49px;top:226.83px;font-family:'Liberation Sans',sans-serif;font-size:8.3px;font-weight:normal;font-style:normal;color:#333;transform:scaleX(0.9867);">22%</div>
<div class="t" style="left:992.50px;top:226.83px;font-family:'Liberation Sans',sans-serif;font-size:8.3px;font-weight:normal;font-style:normal;color:#333;transform:scaleX(0.9867);">24%</div>
<div class="t" style="left:75.70px;top:248.14px;font-family:'Liberation Sans',sans-serif;font-size:8.3px;font-weight:normal;font-style:normal;color:#333;transform:scaleX(1.0000);">Revenue 4</div>
<div class="t" style="left:198.97px;top:248.14px;font-family:'Liberation Sans',sans-serif;font-size:8.3px;font-weight:normal;font-style:normal;color:#333;transform:scaleX(0.9190);">$ 21</div>
<div class="t" style="left:233.67px;top:248.14px;font-family:'Liberation Sans',sans-serif;font-size:8.3px;font-weight:normal;font-style:normal;color:#333;transform:scaleX(0.9190);">$ 113</div>
<div class="t" style="left:275.72px;top:248.14px;font-family:'Liberation Sans',sans-serif;font-size:8.3px;font-weight:normal;font-style:normal;color:#333;transform:scaleX(0.9190);">$ 83</div>
<div class="t" style="left:314.10px;top:248.14px;font-family:'Liberation Sans',sans-serif;font-size:8.3px;font-weight:normal;font-style:normal;color:#333;transform:scaleX(0.9190);">$ 17</div>
<div class="t" style="left:347.88px;top:248.14px;font-family:'Liberation Sans',sans-serif;font-size:8.3px;font-weight:normal;font-style:normal;color:#333;transform:scaleX(0.9190);">$ 130</div>
<div class="t" style="left:390.85px;top:248.14px;font-family:'Liberation Sans',sans-serif;font-size:8.3px;font-weight:normal;font-style:normal;color:#333;transform:scaleX(0.9190);">$ 26</div>
<div class="t" style="left:424.62px;top:248.14px;font-family:'Liberation Sans',sans-serif;font-size:8.3px;font-weight:normal;font-style:normal;color:#333;transform:scaleX(0.9190);">$ 167</div>
<div class="t" style="left:463.92px;top:248.14px;font-family:'Liberation Sans',sans-serif;font-size:8.3px;font-weight:normal;font-style:normal;color:#333;transform:scaleX(0.9190);">$ 102</div>
<div class="t" style="left:505.97px;top:248.14px;font-family:'Liberation Sans',sans-serif;font-size:8.3px;font-weight:normal;font-style:normal;color:#333;transform:scaleX(0.9190);">$ 82</div>
<div class="t" style="left:544.35px;top:248.14px;font-family:'Liberation Sans',sans-serif;font-size:8.3px;font-weight:normal;font-style:normal;color:#333;transform:scaleX(0.9190);">$ 33</div>
<div class="t" style="left:582.72px;top:248.14px;font-family:'Liberation Sans',sans-serif;font-size:8.3px;font-weight:normal;font-style:normal;color:#333;transform:scaleX(0.9190);">$ 88</div>
<div class="t" style="left:616.50px;top:248.14px;font-family:'Liberation Sans',sans-serif;font-size:8.3px;font-weight:normal;font-style:normal;color:#333;transform:scaleX(0.9190);">$ 193</div>
<div class="t" style="left:645.10px;top:248.14px;font-family:'Liberation Sans',sans-serif;font-size:8.3px;font-weight:normal;font-style:normal;color:#333;transform:scaleX(0.9741);">$ 1,055</div>
<div class="t" style="left:695.11px;top:248.14px;font-family:'Liberation Sans',sans-serif;font-size:8.3px;font-weight:normal;font-style:normal;color:#333;transform:scaleX(0.9867);">11%</div>
<div class="t" style="left:732.37px;top:248.14px;font-family:'Liberation Sans',sans-serif;font-size:8.3px;font-weight:normal;font-style:normal;color:#333;transform:scaleX(0.9867);">3%</div>
<div class="t" style="left:761.43px;top:248.14px;font-family:'Liberation Sans',sans-serif;font-size:8.3px;font-weight:normal;font-style:normal;color:#333;transform:scaleX(0.9867);">15%</div>
<div class="t" style="left:794.44px;top:248.14px;font-family:'Liberation Sans',sans-serif;font-size:8.3px;font-weight:normal;font-style:normal;color:#333;transform:scaleX(0.9867);">10%</div>
<div class="t" style="left:831.40px;top:248.14px;font-family:'Liberation Sans',sans-serif;font-size:8.3px;font-weight:normal;font-style:normal;color:#333;transform:scaleX(0.9867);">3%</div>
<div class="t" style="left:860.46px;top:248.14px;font-family:'Liberation Sans',sans-serif;font-size:8.3px;font-weight:normal;font-style:normal;color:#333;transform:scaleX(0.9867);">16%</div>
<div class="t" style="left:897.42px;top:248.14px;font-family:'Liberation Sans',sans-serif;font-size:8.3px;font-weight:normal;font-style:normal;color:#333;transform:scaleX(0.9867);">4%</div>
<div class="t" style="left:926.48px;top:248.14px;font-family:'Liberation Sans',sans-serif;font-size:8.3px;font-weight:normal;font-style:normal;color:#333;transform:scaleX(0.9867);">28%</div>
<div class="t" style="left:959.49px;top:248.14px;font-family:'Liberation Sans',sans-serif;font-size:8.3px;font-weight:normal;font-style:normal;color:#333;transform:scaleX(0.9867);">15%</div>
<div class="t" style="left:992.50px;top:248.14px;font-family:'Liberation Sans',sans-serif;font-size:8.3px;font-weight:normal;font-style:normal;color:#333;transform:scaleX(0.9867);">11%</div>
<div class="t" style="left:75.70px;top:269.45px;font-family:'Liberation Sans',sans-serif;font-size:8.3px;font-weight:normal;font-style:normal;color:#333;transform:scaleX(1.0000);">Revenue 5</div>
<div class="t" style="left:198.97px;top:269.45px;font-family:'Liberation Sans',sans-serif;font-size:8.3px;font-weight:normal;font-style:normal;color:#333;transform:scaleX(0.9190);">$ 70</div>
<div class="t" style="left:232.75px;top:269.45px;font-family:'Liberation Sans',sans-serif;font-size:8.3px;font-weight:normal;font-style:normal;color:#333;transform:scaleX(0.9190);">$ 160</div>
<div class="t" style="left:271.12px;top:269.45px;font-family:'Liberation Sans',sans-serif;font-size:8.3px;font-weight:normal;font-style:normal;color:#333;transform:scaleX(0.9190);">$ 125</div>
<div class="t" style="left:314.10px;top:269.45px;font-family:'Liberation Sans',sans-serif;font-size:8.3px;font-weight:normal;font-style:normal;color:#333;transform:scaleX(0.9190);">$ 84</div>
<div class="t" style="left:348.79px;top:269.45px;font-family:'Liberation Sans',sans-serif;font-size:8.3px;font-weight:normal;font-style:normal;color:#333;transform:scaleX(0.9190);">$ 191</div>
<div class="t" style="left:390.85px;top:269.45px;font-family:'Liberation Sans',sans-serif;font-size:8.3px;font-weight:normal;font-style:normal;color:#333;transform:scaleX(0.9190);">$ 97</div>
<div class="t" style="left:429.22px;top:269.45px;font-family:'Liberation Sans',sans-serif;font-size:8.3px;font-weight:normal;font-style:normal;color:#333;transform:scaleX(0.9190);">$ 52</div>
<div class="t" style="left:467.60px;top:269.45px;font-family:'Liberation Sans',sans-serif;font-size:8.3px;font-weight:normal;font-style:normal;color:#333;transform:scaleX(0.9190);">$ 45</div>
<div class="t" style="left:501.38px;top:269.45px;font-family:'Liberation Sans',sans-serif;font-size:8.3px;font-weight:normal;font-style:normal;color:#333;transform:scaleX(0.9190);">$ 173</div>
<div class="t" style="left:539.75px;top:269.45px;font-family:'Liberation Sans',sans-serif;font-size:8.3px;font-weight:normal;font-style:normal;color:#333;transform:scaleX(0.9190);">$ 136</div>
<div class="t" style="left:579.04px;top:269.45px;font-family:'Liberation Sans',sans-serif;font-size:8.3px;font-weight:normal;font-style:normal;color:#333;transform:scaleX(0.9190);">$ 144</div>
<div class="t" style="left:616.50px;top:269.45px;font-family:'Liberation Sans',sans-serif;font-size:8.3px;font-weight:normal;font-style:normal;color:#333;transform:scaleX(0.9190);">$ 167</div>
<div class="t" style="left:645.10px;top:269.45px;font-family:'Liberation Sans',sans-serif;font-size:8.3px;font-weight:normal;font-style:normal;color:#333;transform:scaleX(0.9741);">$ 1,444</div>
<div class="t" style="left:695.11px;top:269.45px;font-family:'Liberation Sans',sans-serif;font-size:8.3px;font-weight:normal;font-style:normal;color:#333;transform:scaleX(0.9867);">20%</div>
<div class="t" style="left:728.42px;top:269.45px;font-family:'Liberation Sans',sans-serif;font-size:8.3px;font-weight:normal;font-style:normal;color:#333;transform:scaleX(0.9867);">11%</div>
<div class="t" style="left:761.43px;top:269.45px;font-family:'Liberation Sans',sans-serif;font-size:8.3px;font-weight:normal;font-style:normal;color:#333;transform:scaleX(0.9867);">22%</div>
<div class="t" style="left:794.44px;top:269.45px;font-family:'Liberation Sans',sans-serif;font-size:8.3px;font-weight:normal;font-style:normal;color:#333;transform:scaleX(0.9867);">15%</div>
<div class="t" style="left:827.45px;top:269.45px;font-family:'Liberation Sans',sans-serif;font-size:8.3px;font-weight:normal;font-style:normal;color:#333;transform:scaleX(0.9867);">14%</div>
<div class="t" style="left:860.46px;top:269.45px;font-family:'Liberation Sans',sans-serif;font-size:8.3px;font-weight:normal;font-style:normal;color:#333;transform:scaleX(0.9867);">24%</div>
<div class="t" style="left:893.47px;top:269.45px;font-family:'Liberation Sans',sans-serif;font-size:8.3px;font-weight:normal;font-style:normal;color:#333;transform:scaleX(0.9867);">17%</div>
<div class="t" style="left:930.43px;top:269.45px;font-family:'Liberation Sans',sans-serif;font-size:8.3px;font-weight:normal;font-style:normal;color:#333;transform:scaleX(0.9867);">9%</div>
<div class="t" style="left:963.44px;top:269.45px;font-family:'Liberation Sans',sans-serif;font-size:8.3px;font-weight:normal;font-style:normal;color:#333;transform:scaleX(0.9867);">7%</div>
<div class="t" style="left:992.50px;top:269.45px;font-family:'Liberation Sans',sans-serif;font-size:8.3px;font-weight:normal;font-style:normal;color:#333;transform:scaleX(0.9867);">23%</div>
<div class="t" style="left:75.70px;top:290.76px;font-family:'Liberation Sans',sans-serif;font-size:8.3px;font-weight:normal;font-style:normal;color:#333;transform:scaleX(1.0000);">Revenue 6</div>
<div class="t" style="left:198.97px;top:290.76px;font-family:'Liberation Sans',sans-serif;font-size:8.3px;font-weight:normal;font-style:normal;color:#333;transform:scaleX(0.9190);">$ 61</div>
<div class="t" style="left:237.35px;top:290.76px;font-family:'Liberation Sans',sans-serif;font-size:8.3px;font-weight:normal;font-style:normal;color:#333;transform:scaleX(0.9190);">$ 99</div>
<div class="t" style="left:275.72px;top:290.76px;font-family:'Liberation Sans',sans-serif;font-size:8.3px;font-weight:normal;font-style:normal;color:#333;transform:scaleX(0.9190);">$ 70</div>
<div class="t" style="left:310.42px;top:290.76px;font-family:'Liberation Sans',sans-serif;font-size:8.3px;font-weight:normal;font-style:normal;color:#333;transform:scaleX(0.9190);">$ 162</div>
<div class="t" style="left:352.47px;top:290.76px;font-family:'Liberation Sans',sans-serif;font-size:8.3px;font-weight:normal;font-style:normal;color:#333;transform:scaleX(0.9190);">$ 28</div>
<div class="t" style="left:386.25px;top:290.76px;font-family:'Liberation Sans',sans-serif;font-size:8.3px;font-weight:normal;font-style:normal;color:#333;transform:scaleX(0.9190);">$ 163</div>
<div class="t" style="left:425.54px;top:290.76px;font-family:'Liberation Sans',sans-serif;font-size:8.3px;font-weight:normal;font-style:normal;color:#333;transform:scaleX(0.9190);">$ 101</div>
<div class="t" style="left:463.00px;top:290.76px;font-family:'Liberation Sans',sans-serif;font-size:8.3px;font-weight:normal;font-style:normal;color:#333;transform:scaleX(0.9190);">$ 103</div>
<div class="t" style="left:505.97px;top:290.76px;font-family:'Liberation Sans',sans-serif;font-size:8.3px;font-weight:normal;font-style:normal;color:#333;transform:scaleX(0.9190);">$ 78</div>
<div class="t" style="left:544.35px;top:290.76px;font-family:'Liberation Sans',sans-serif;font-size:8.3px;font-weight:normal;font-style:normal;color:#333;transform:scaleX(0.9190);">$ 33</div>
<div class="t" style="left:579.04px;top:290.76px;font-family:'Liberation Sans',sans-serif;font-size:8.3px;font-weight:normal;font-style:normal;color:#333;transform:scaleX(0.9190);">$ 162</div>
<div class="t" style="left:616.50px;top:290.76px;font-family:'Liberation Sans',sans-serif;font-size:8.3px;font-weight:normal;font-style:normal;color:#333;transform:scaleX(0.9190);">$ 159</div>
<div class="t" style="left:645.10px;top:290.76px;font-family:'Liberation Sans',sans-serif;font-size:8.3px;font-weight:normal;font-style:normal;color:#333;transform:scaleX(0.9741);">$ 1,219</div>
<div class="t" style="left:695.11px;top:290.76px;font-family:'Liberation Sans',sans-serif;font-size:8.3px;font-weight:normal;font-style:normal;color:#333;transform:scaleX(0.9867);">10%</div>
<div class="t" style="left:728.42px;top:290.76px;font-family:'Liberation Sans',sans-serif;font-size:8.3px;font-weight:normal;font-style:normal;color:#333;transform:scaleX(0.9867);">10%</div>
<div class="t" style="left:761.43px;top:290.76px;font-family:'Liberation Sans',sans-serif;font-size:8.3px;font-weight:normal;font-style:normal;color:#333;transform:scaleX(0.9867);">13%</div>
<div class="t" style="left:798.39px;top:290.76px;font-family:'Liberation Sans',sans-serif;font-size:8.3px;font-weight:normal;font-style:normal;color:#333;transform:scaleX(0.9867);">9%</div>
<div class="t" style="left:827.45px;top:290.76px;font-family:'Liberation Sans',sans-serif;font-size:8.3px;font-weight:normal;font-style:normal;color:#333;transform:scaleX(0.9867);">27%</div>
<div class="t" style="left:864.41px;top:290.76px;font-family:'Liberation Sans',sans-serif;font-size:8.3px;font-weight:normal;font-style:normal;color:#333;transform:scaleX(0.9867);">3%</div>
<div class="t" style="left:893.47px;top:290.76px;font-family:'Liberation Sans',sans-serif;font-size:8.3px;font-weight:normal;font-style:normal;color:#333;transform:scaleX(0.9867);">28%</div>
<div class="t" style="left:926.48px;top:290.76px;font-family:'Liberation Sans',sans-serif;font-size:8.3px;font-weight:normal;font-style:normal;color:#333;transform:scaleX(0.9867);">17%</div>
<div class="t" style="left:959.49px;top:290.76px;font-family:'Liberation Sans',sans-serif;font-size:8.3px;font-weight:normal;font-style:normal;color:#333;transform:scaleX(0.9867);">15%</div>
<div class="t" style="left:992.50px;top:290.76px;font-family:'Liberation Sans',sans-serif;font-size:8.3px;font-weight:normal;font-style:normal;color:#333;transform:scaleX(0.9867);">10%</div>
<div class="t" style="left:75.70px;top:312.07px;font-family:'Liberation Sans',sans-serif;font-size:8.3px;font-weight:normal;font-style:normal;color:#333;transform:scaleX(1.0000);">Revenue 7</div>
<div class="t" style="left:194.38px;top:312.07px;font-family:'Liberation Sans',sans-serif;font-size:8.3px;font-weight:normal;font-style:normal;color:#333;transform:scaleX(0.9190);">$ 105</div>
<div class="t" style="left:237.35px;top:312.07px;font-family:'Liberation Sans',sans-serif;font-size:8.3px;font-weight:normal;font-style:normal;color:#333;transform:scaleX(0.9190);">$ 55</div>
<div class="t" style="left:271.12px;top:312.07px;font-family:'Liberation Sans',sans-serif;font-size:8.3px;font-weight:normal;font-style:normal;color:#333;transform:scaleX(0.9190);">$ 163</div>
<div class="t" style="left:314.10px;top:312.07px;font-family:'Liberation Sans',sans-serif;font-size:8.3px;font-weight:normal;font-style:normal;color:#333;transform:scaleX(0.9190);">$ 12</div>
<div class="t" style="left:348.79px;top:312.07px;font-family:'Liberation Sans',sans-serif;font-size:8.3px;font-weight:normal;font-style:normal;color:#333;transform:scaleX(0.9190);">$ 117</div>
<div class="t" style="left:390.85px;top:312.07px;font-family:'Liberation Sans',sans-serif;font-size:8.3px;font-weight:normal;font-style:normal;color:#333;transform:scaleX(0.9190);">$ 83</div>
<div class="t" style="left:424.62px;top:312.07px;font-family:'Liberation Sans',sans-serif;font-size:8.3px;font-weight:normal;font-style:normal;color:#333;transform:scaleX(0.9190);">$ 163</div>
<div class="t" style="left:463.00px;top:312.07px;font-family:'Liberation Sans',sans-serif;font-size:8.3px;font-weight:normal;font-style:normal;color:#333;transform:scaleX(0.9190);">$ 120</div>
<div class="t" style="left:502.29px;top:312.07px;font-family:'Liberation Sans',sans-serif;font-size:8.3px;font-weight:normal;font-style:normal;color:#333;transform:scaleX(0.9190);">$ 171</div>
<div class="t" style="left:544.35px;top:312.07px;font-family:'Liberation Sans',sans-serif;font-size:8.3px;font-weight:normal;font-style:normal;color:#333;transform:scaleX(0.9190);">$ 79</div>
<div class="t" style="left:578.12px;top:312.07px;font-family:'Liberation Sans',sans-serif;font-size:8.3px;font-weight:normal;font-style:normal;color:#333;transform:scaleX(0.9190);">$ 105</div>
<div class="t" style="left:621.10px;top:312.07px;font-family:'Liberation Sans',sans-serif;font-size:8.3px;font-weight:normal;font-style:normal;color:#333;transform:scaleX(0.9190);">$ 69</div>
<div class="t" style="left:645.10px;top:312.07px;font-family:'Liberation Sans',sans-serif;font-size:8.3px;font-weight:normal;font-style:normal;color:#333;transform:scaleX(0.9741);">$ 1,242</div>
<div class="t" style="left:695.11px;top:312.07px;font-family:'Liberation Sans',sans-serif;font-size:8.3px;font-weight:normal;font-style:normal;color:#333;transform:scaleX(0.9867);">10%</div>
<div class="t" style="left:728.42px;top:312.07px;font-family:'Liberation Sans',sans-serif;font-size:8.3px;font-weight:normal;font-style:normal;color:#333;transform:scaleX(0.9867);">17%</div>
<div class="t" style="left:765.38px;top:312.07px;font-family:'Liberation Sans',sans-serif;font-size:8.3px;font-weight:normal;font-style:normal;color:#333;transform:scaleX(0.9867);">7%</div>
<div class="t" style="left:794.44px;top:312.07px;font-family:'Liberation Sans',sans-serif;font-size:8.3px;font-weight:normal;font-style:normal;color:#333;transform:scaleX(0.9867);">20%</div>
<div class="t" style="left:831.40px;top:312.07px;font-family:'Liberation Sans',sans-serif;font-size:8.3px;font-weight:normal;font-style:normal;color:#333;transform:scaleX(0.9867);">2%</div>
<div class="t" style="left:860.46px;top:312.07px;font-family:'Liberation Sans',sans-serif;font-size:8.3px;font-weight:normal;font-style:normal;color:#333;transform:scaleX(0.9867);">14%</div>
<div class="t" style="left:893.47px;top:312.07px;font-family:'Liberation Sans',sans-serif;font-size:8.3px;font-weight:normal;font-style:normal;color:#333;transform:scaleX(0.9867);">14%</div>
<div class="t" style="left:926.48px;top:312.07px;font-family:'Liberation Sans',sans-serif;font-size:8.3px;font-weight:normal;font-style:normal;color:#333;transform:scaleX(0.9867);">27%</div>
<div class="t" style="left:959.49px;top:312.07px;font-family:'Liberation Sans',sans-serif;font-size:8.3px;font-weight:normal;font-style:normal;color:#333;transform:scaleX(0.9867);">18%</div>
<div class="t" style="left:992.50px;top:312.07px;font-family:'Liberation Sans',sans-serif;font-size:8.3px;font-weight:normal;font-style:normal;color:#333;transform:scaleX(0.9867);">23%</div>
<div class="t" style="left:75.90px;top:335.80px;font-family:'Liberation Sans',sans-serif;font-size:6.8px;font-weight:bold;font-style:normal;color:#4a4331;transform:scaleX(0.8848);">TOTAL SALES</div>
<div class="t" style="left:196.38px;top:336.00px;font-family:'Liberation Sans',sans-serif;font-size:6.8px;font-weight:bold;font-style:normal;color:#4a4331;transform:scaleX(1.0118);">$ 624</div>
<div class="t" style="left:234.75px;top:336.00px;font-family:'Liberation Sans',sans-serif;font-size:6.8px;font-weight:bold;font-style:normal;color:#4a4331;transform:scaleX(1.0118);">$ 736</div>
<div class="t" style="left:273.12px;top:336.00px;font-family:'Liberation Sans',sans-serif;font-size:6.8px;font-weight:bold;font-style:normal;color:#4a4331;transform:scaleX(1.0118);">$ 820</div>
<div class="t" style="left:312.51px;top:336.00px;font-family:'Liberation Sans',sans-serif;font-size:6.8px;font-weight:bold;font-style:normal;color:#4a4331;transform:scaleX(1.0118);">$ 611</div>
<div class="t" style="left:349.88px;top:336.00px;font-family:'Liberation Sans',sans-serif;font-size:6.8px;font-weight:bold;font-style:normal;color:#4a4331;transform:scaleX(1.0118);">$ 812</div>
<div class="t" style="left:388.25px;top:336.00px;font-family:'Liberation Sans',sans-serif;font-size:6.8px;font-weight:bold;font-style:normal;color:#4a4331;transform:scaleX(1.0118);">$ 578</div>
<div class="t" style="left:426.62px;top:336.00px;font-family:'Liberation Sans',sans-serif;font-size:6.8px;font-weight:bold;font-style:normal;color:#4a4331;transform:scaleX(1.0118);">$ 597</div>
<div class="t" style="left:465.00px;top:336.00px;font-family:'Liberation Sans',sans-serif;font-size:6.8px;font-weight:bold;font-style:normal;color:#4a4331;transform:scaleX(1.0118);">$ 675</div>
<div class="t" style="left:503.38px;top:336.00px;font-family:'Liberation Sans',sans-serif;font-size:6.8px;font-weight:bold;font-style:normal;color:#4a4331;transform:scaleX(1.0118);">$ 744</div>
<div class="t" style="left:541.75px;top:336.00px;font-family:'Liberation Sans',sans-serif;font-size:6.8px;font-weight:bold;font-style:normal;color:#4a4331;transform:scaleX(1.0118);">$ 681</div>
<div class="t" style="left:580.12px;top:336.00px;font-family:'Liberation Sans',sans-serif;font-size:6.8px;font-weight:bold;font-style:normal;color:#4a4331;transform:scaleX(1.0118);">$ 739</div>
<div class="t" style="left:612.43px;top:336.00px;font-family:'Liberation Sans',sans-serif;font-size:6.8px;font-weight:bold;font-style:normal;color:#4a4331;transform:scaleX(1.0118);">$ 1,043</div>
<div class="t" style="left:654.73px;top:336.00px;font-family:'Liberation Sans',sans-serif;font-size:6.8px;font-weight:bold;font-style:normal;color:#4a4331;transform:scaleX(1.0118);">$ 8,660</div>
<div class="t" style="left:693.70px;top:336.00px;font-family:'Liberation Sans',sans-serif;font-size:6.8px;font-weight:bold;font-style:normal;color:#4a4331;transform:scaleX(1.0118);">100%</div>
<div class="t" style="left:727.01px;top:336.00px;font-family:'Liberation Sans',sans-serif;font-size:6.8px;font-weight:bold;font-style:normal;color:#4a4331;transform:scaleX(1.0118);">100%</div>
<div class="t" style="left:760.02px;top:336.00px;font-family:'Liberation Sans',sans-serif;font-size:6.8px;font-weight:bold;font-style:normal;color:#4a4331;transform:scaleX(1.0118);">100%</div>
<div class="t" style="left:793.03px;top:336.00px;font-family:'Liberation Sans',sans-serif;font-size:6.8px;font-weight:bold;font-style:normal;color:#4a4331;transform:scaleX(1.0118);">100%</div>
<div class="t" style="left:826.04px;top:336.00px;font-family:'Liberation Sans',sans-serif;font-size:6.8px;font-weight:bold;font-style:normal;color:#4a4331;transform:scaleX(1.0118);">100%</div>
<div class="t" style="left:859.05px;top:336.00px;font-family:'Liberation Sans',sans-serif;font-size:6.8px;font-weight:bold;font-style:normal;color:#4a4331;transform:scaleX(1.0118);">100%</div>
<div class="t" style="left:892.06px;top:336.00px;font-family:'Liberation Sans',sans-serif;font-size:6.8px;font-weight:bold;font-style:normal;color:#4a4331;transform:scaleX(1.0118);">100%</div>
<div class="t" style="left:925.07px;top:336.00px;font-family:'Liberation Sans',sans-serif;font-size:6.8px;font-weight:bold;font-style:normal;color:#4a4331;transform:scaleX(1.0118);">100%</div>
<div class="t" style="left:958.08px;top:336.00px;font-family:'Liberation Sans',sans-serif;font-size:6.8px;font-weight:bold;font-style:normal;color:#4a4331;transform:scaleX(1.0118);">100%</div>
<div class="t" style="left:991.09px;top:336.00px;font-family:'Liberation Sans',sans-serif;font-size:6.8px;font-weight:bold;font-style:normal;color:#4a4331;transform:scaleX(1.0118);">100%</div>
<div class="t" style="left:61.70px;top:420.50px;font-family:'Liberation Sans',sans-serif;font-size:7.9px;font-weight:bold;font-style:normal;color:#217346;transform:scaleX(0.8392);">Revenues (Sales)</div>
<div class="t" style="left:130.20px;top:420.80px;font-family:'Liberation Sans',sans-serif;font-size:7.4px;font-weight:normal;font-style:normal;color:#5a5040;transform:scaleX(0.9114);">Cost of Sales</div>
<div class="t" style="left:184.89px;top:420.80px;font-family:'Liberation Sans',sans-serif;font-size:7.4px;font-weight:normal;font-style:normal;color:#3a4a55;transform:scaleX(0.9097);">Expenses</div>
<div class="t" style="left:2.60px;top:436.00px;font-family:'Liberation Sans',sans-serif;font-size:8.0px;font-weight:normal;font-style:normal;color:#222;transform:scaleX(0.8994);">http://www.testwebsite.com/files/TestExcel.xlsx</div>
<div class="t" style="left:172.20px;top:435.50px;font-family:'Liberation Sans',sans-serif;font-size:7.6px;font-weight:normal;font-style:normal;color:#222;transform:scaleX(0.8652);">Add Revenue</div>
</body></html>
